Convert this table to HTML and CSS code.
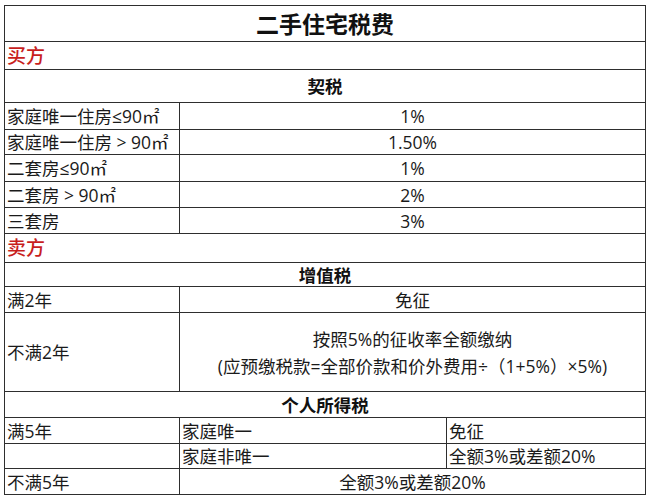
FILE: index.html
```html
<!DOCTYPE html>
<html lang="zh-CN">
<head>
<meta charset="utf-8">
<title>二手住宅税费</title>
<link rel="stylesheet" href="styles.css">
</head>
<body>
<table class="tax">
  <colgroup>
    <col class="c1"><col class="c2"><col class="c3">
  </colgroup>
  <tr class="r-title"><td colspan="3" class="title">二手住宅税费</td></tr>
  <tr class="r-party"><td colspan="3" class="party">买方</td></tr>
  <tr class="r-head"><td colspan="3" class="head">契税</td></tr>
  <tr class="r27"><td>家庭唯一住房≤90㎡</td><td colspan="2" class="center">1%</td></tr>
  <tr class="r25"><td>家庭唯一住房 &gt; 90㎡</td><td colspan="2" class="center">1.50%</td></tr>
  <tr class="r27"><td>二套房≤90㎡</td><td colspan="2" class="center">1%</td></tr>
  <tr class="r26"><td>二套房 &gt; 90㎡</td><td colspan="2" class="center">2%</td></tr>
  <tr class="r26"><td>三套房</td><td colspan="2" class="center">3%</td></tr>
  <tr class="r-party2"><td colspan="3" class="party">卖方</td></tr>
  <tr class="r24"><td colspan="3" class="head">增值税</td></tr>
  <tr class="r26"><td>满2年</td><td colspan="2" class="center">免征</td></tr>
  <tr class="r-tall"><td>不满2年</td><td colspan="2" class="center multi">按照5%的征收率全额缴纳<br>(应预缴税款=全部价款和价外费用÷（1+5%）×5%)</td></tr>
  <tr class="r26"><td colspan="3" class="head">个人所得税</td></tr>
  <tr class="r26"><td>满5年</td><td>家庭唯一</td><td>免征</td></tr>
  <tr class="r25"><td></td><td>家庭非唯一</td><td>全额3%或差额20%</td></tr>
  <tr class="r26"><td>不满5年</td><td colspan="2" class="center">全额3%或差额20%</td></tr>
</table>
</body>
</html>
```
FILE: styles.css
```css
html, body {
  margin: 0;
  padding: 0;
  background: #ffffff;
}
body {
  padding: 5px 0 0 4px;
  font-family: "Open Sans", "Noto Sans CJK SC", sans-serif;
  color: #1a1a1a;
}
.tax {
  border-collapse: collapse;
  table-layout: fixed;
  width: 641px;
  font-size: 17.5px;
}
.c1 { width: 175px; }
.c2 { width: 267px; }
.c3 { width: 199px; }
.tax td {
  border: 1px solid #2e2e2e;
  padding: 0 2px;
  line-height: 20px;
  white-space: nowrap;
  vertical-align: middle;
}
.tax td.center { text-align: center; }
.tax td.title {
  text-align: center;
  font-weight: bold;
  font-size: 23px;
  color: #111;
}
.tax td.party {
  color: #c81e1e;
  font-size: 19px;
  font-weight: 500;
}
.tax td.head {
  text-align: center;
  font-weight: bold;
  font-size: 17.5px;
  color: #111;
}
.tax td.multi { line-height: 27px; padding-top: 2px; }
.r-title { height: 36px; }
.r-party { height: 28px; }
.r-head { height: 33px; }
.r-party2 { height: 29px; }
.r24 { height: 24px; }
.r25 { height: 25px; }
.r26 { height: 26px; }
.r27 { height: 27px; }
.r-tall { height: 79px; }
```
